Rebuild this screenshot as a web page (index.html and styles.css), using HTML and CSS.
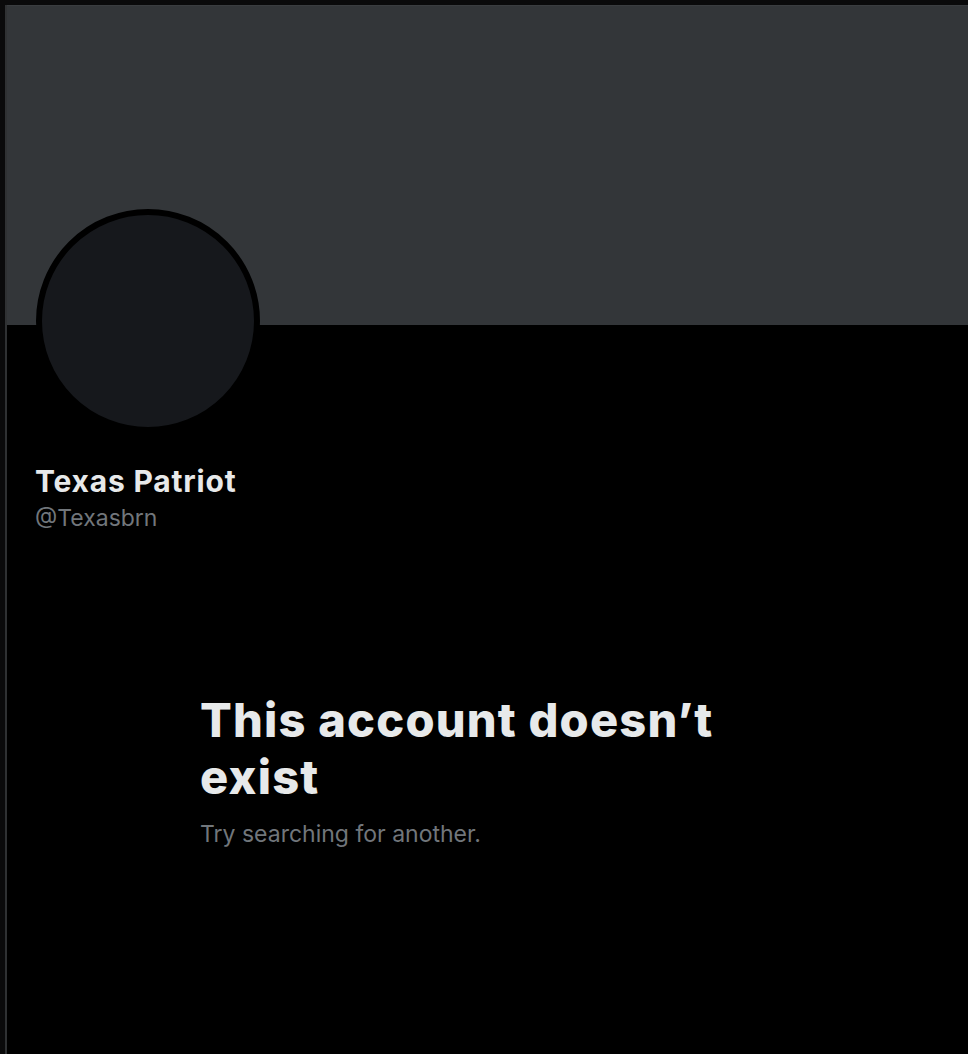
FILE: index.html
```html
<!DOCTYPE html>
<html>
<head>
<meta charset="utf-8">
<link rel="stylesheet" href="styles.css">
</head>
<body>
<div class="page">
  <div class="banner"></div>
  <div class="profile">
    <div class="avatar"></div>
    <div class="names">
      <div class="name">Texas Patriot</div>
      <div class="handle">@Texasbrn</div>
    </div>
  </div>
  <div class="empty">
    <h1 class="title">This account doesn’t exist</h1>
    <p class="sub">Try searching for another.</p>
  </div>
</div>
</body>
</html>
```

FILE: styles.css
```css
html, body {
  margin: 0;
  padding: 0;
  background: #000;
  height: 100%;
}
body {
  padding: 5px 0 0 5px;
  box-sizing: border-box;
  background: #0a0a0b;
  font-family: Inter, "Liberation Sans", sans-serif;
}
.page {
  background: #000;
  border-left: 2px solid #2f3133;
  height: 100%;
  overflow: hidden;
}
.banner {
  height: 320px;
  background: #333639;
  border-top: 1px solid #3a3d40;
  box-sizing: border-box;
}
.profile {
  padding-left: 29px;
}
.avatar {
  width: 212px;
  height: 212px;
  border-radius: 50%;
  background: #16181c;
  border: 6px solid #000;
  margin-top: -116px;
}
.names {
  margin-left: -1px;
  margin-top: 30px;
}
.name {
  color: #e7e9ea;
  font-weight: 700;
  font-size: 30px;
  line-height: 36px;
  letter-spacing: 0.8px;
}
.handle {
  color: #71767b;
  font-size: 23px;
  line-height: 30px;
  margin-top: 4px;
}
.empty {
  padding-left: 193px;
  margin-top: 158px;
  width: 560px;
}
.title {
  margin: 0;
  color: #e7e9ea;
  font-weight: 800;
  font-size: 47px;
  line-height: 57px;
  letter-spacing: 1.2px;
}
.sub {
  margin: 15px 0 0;
  color: #71767b;
  font-size: 23px;
  line-height: 28px;
}
```
